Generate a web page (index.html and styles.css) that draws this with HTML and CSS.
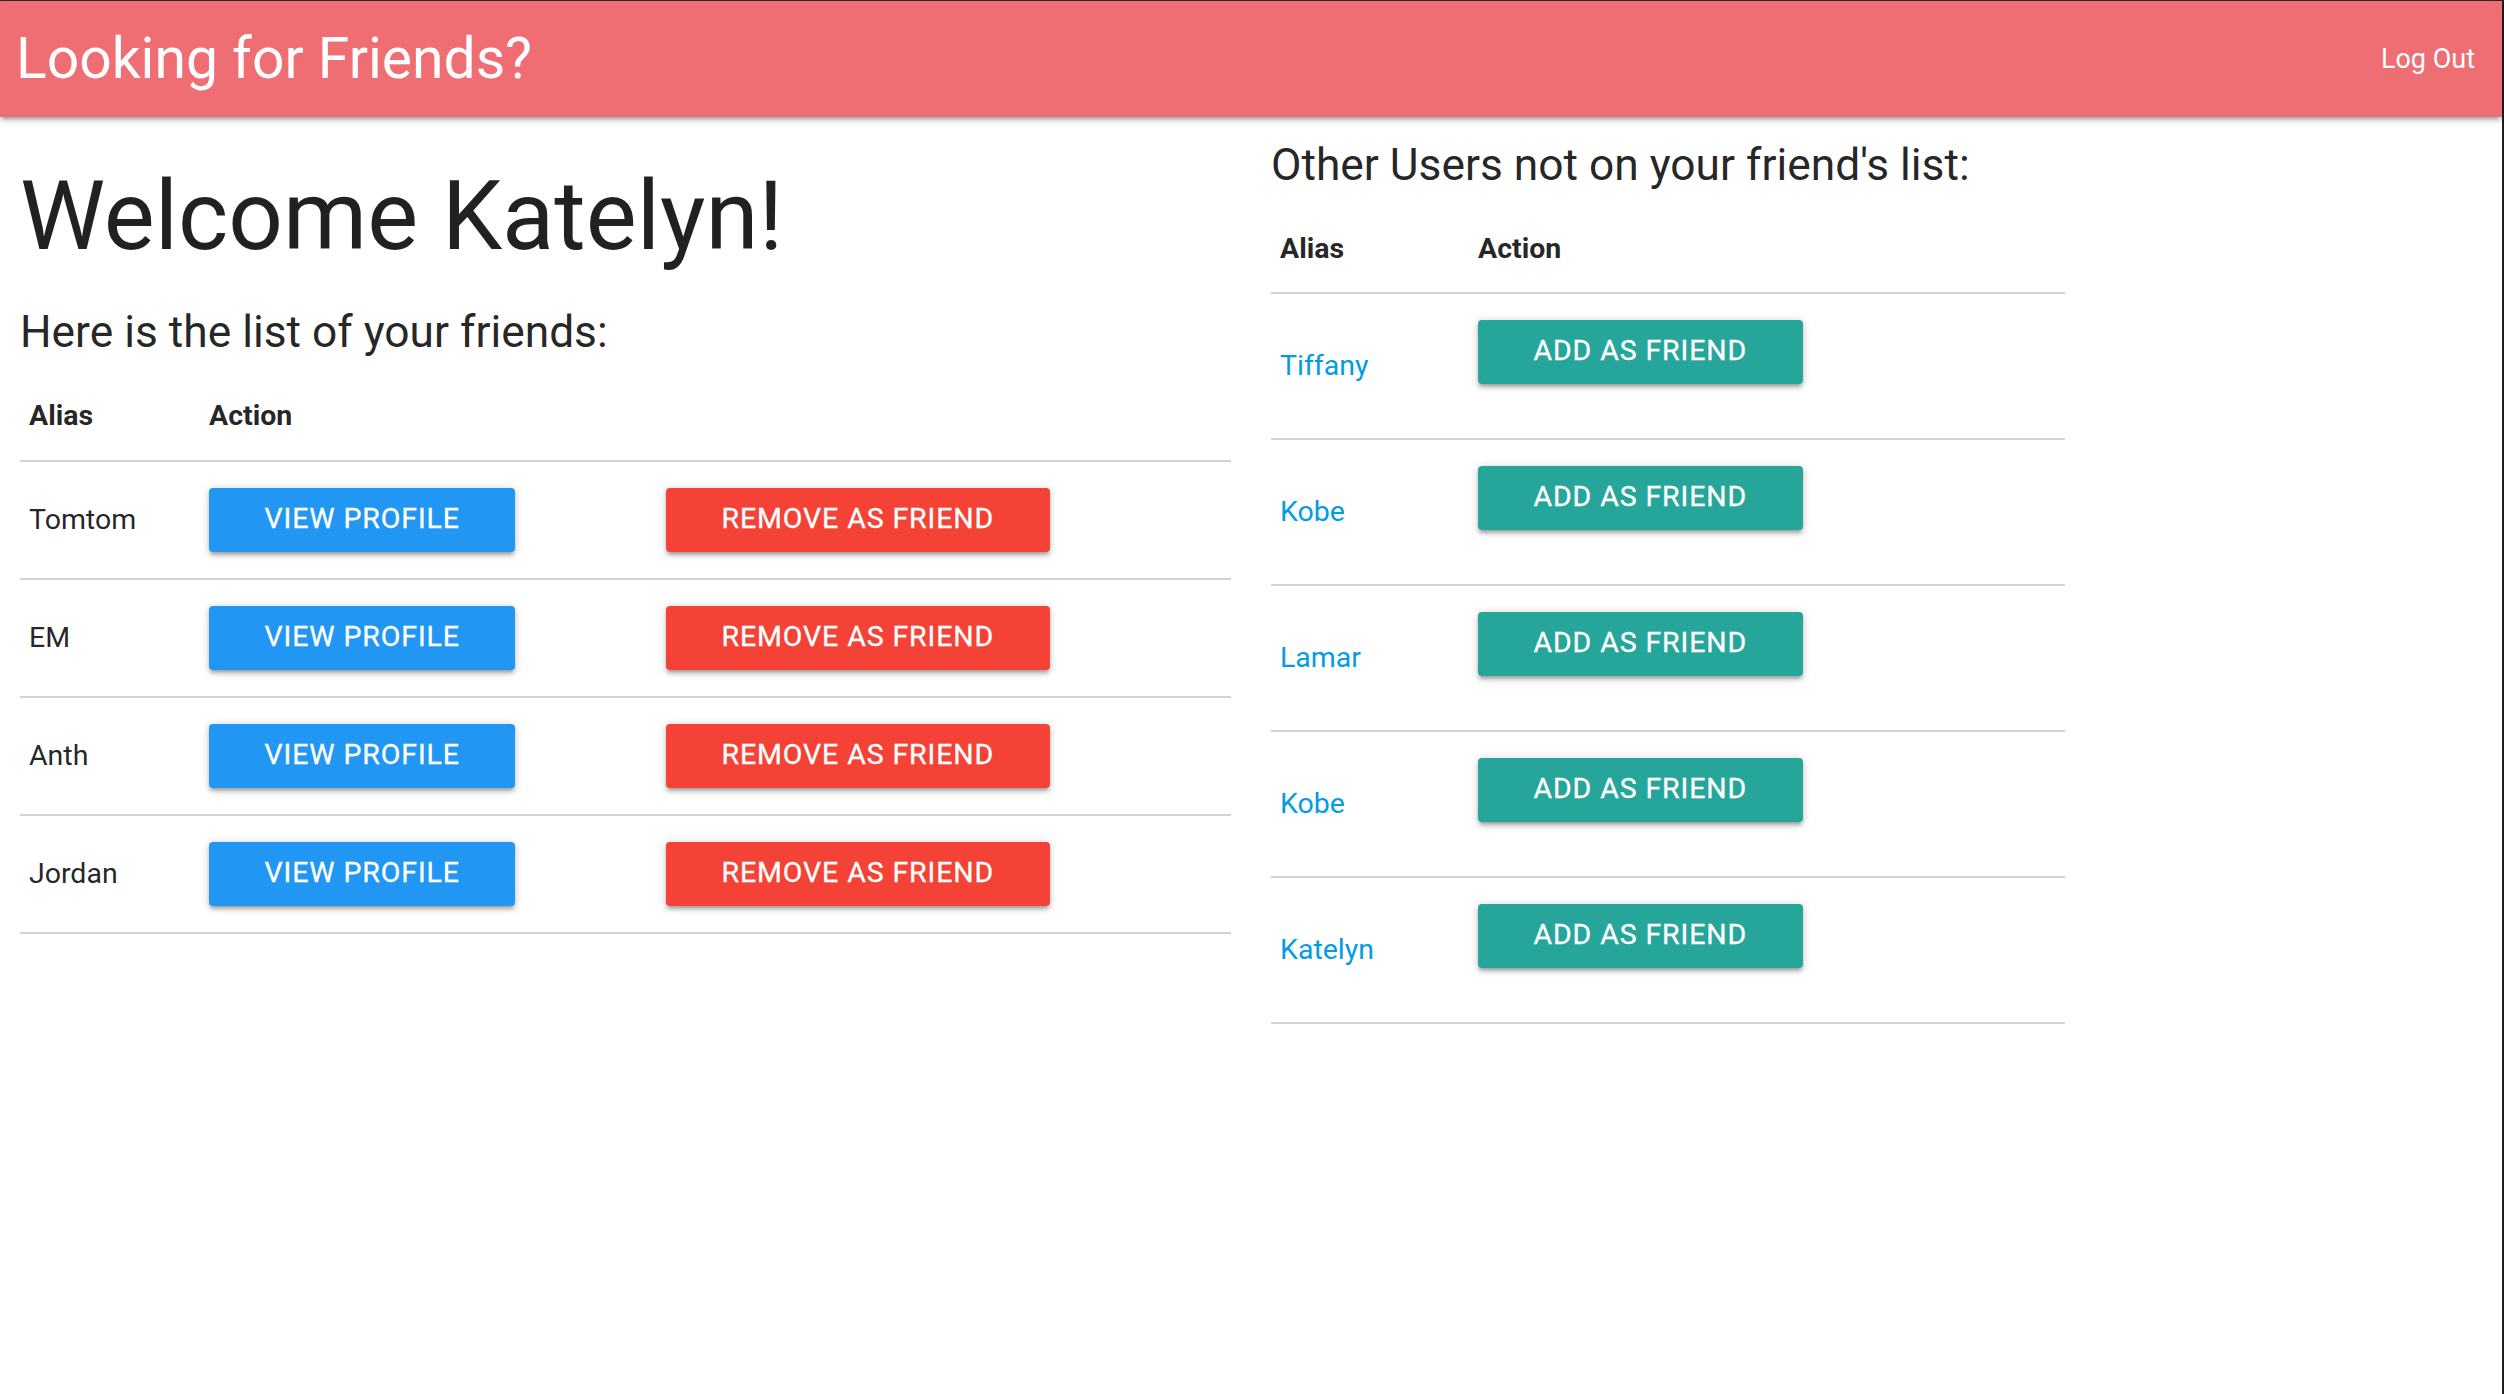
FILE: index.html
```html
<!DOCTYPE html>
<html lang="en">
<head>
<meta charset="utf-8">
<title>Looking for Friends?</title>
<link rel="stylesheet" href="styles.css">
</head>
<body>
<div class="frame">
  <nav class="nav">
    <a class="brand" href="#">Looking for Friends?</a>
    <a class="logout" href="#">Log Out</a>
  </nav>
  <main class="row">
    <section class="col col-left">
      <h2 class="welcome">Welcome Katelyn!</h2>
      <h5 class="subtitle">Here is the list of your friends:</h5>
      <table class="table">
        <colgroup>
          <col class="c-alias-l">
          <col class="c-view">
          <col>
        </colgroup>
        <thead>
          <tr><th>Alias</th><th>Action</th></tr>
        </thead>
        <tbody>
          <tr>
            <td>Tomtom</td>
            <td class="btncell"><a class="btn btn-blue" href="#">View Profile</a></td>
            <td class="btncell"><a class="btn btn-red" href="#">Remove as Friend</a></td>
          </tr>
          <tr>
            <td>EM</td>
            <td class="btncell"><a class="btn btn-blue" href="#">View Profile</a></td>
            <td class="btncell"><a class="btn btn-red" href="#">Remove as Friend</a></td>
          </tr>
          <tr>
            <td>Anth</td>
            <td class="btncell"><a class="btn btn-blue" href="#">View Profile</a></td>
            <td class="btncell"><a class="btn btn-red" href="#">Remove as Friend</a></td>
          </tr>
          <tr>
            <td>Jordan</td>
            <td class="btncell"><a class="btn btn-blue" href="#">View Profile</a></td>
            <td class="btncell"><a class="btn btn-red" href="#">Remove as Friend</a></td>
          </tr>
        </tbody>
      </table>
    </section>
    <section class="col col-right">
      <h5 class="subtitle subtitle-right">Other Users not on your friend's list:</h5>
      <table class="table">
        <colgroup>
          <col class="c-alias-r">
          <col>
        </colgroup>
        <thead>
          <tr><th>Alias</th><th>Action</th></tr>
        </thead>
        <tbody>
          <tr>
            <td><a class="user" href="#">Tiffany</a></td>
            <td class="btncell"><form class="addform"><a class="btn btn-teal" href="#">Add as Friend</a></form></td>
          </tr>
          <tr>
            <td><a class="user" href="#">Kobe</a></td>
            <td class="btncell"><form class="addform"><a class="btn btn-teal" href="#">Add as Friend</a></form></td>
          </tr>
          <tr>
            <td><a class="user" href="#">Lamar</a></td>
            <td class="btncell"><form class="addform"><a class="btn btn-teal" href="#">Add as Friend</a></form></td>
          </tr>
          <tr>
            <td><a class="user" href="#">Kobe</a></td>
            <td class="btncell"><form class="addform"><a class="btn btn-teal" href="#">Add as Friend</a></form></td>
          </tr>
          <tr>
            <td><a class="user" href="#">Katelyn</a></td>
            <td class="btncell"><form class="addform"><a class="btn btn-teal" href="#">Add as Friend</a></form></td>
          </tr>
        </tbody>
      </table>
    </section>
  </main>
</div>
</body>
</html>
```
FILE: styles.css
```css
* { box-sizing: border-box; }

html, body {
  margin: 0;
  padding: 0;
  background: #ffffff;
}

body {
  font-family: Roboto, "Liberation Sans", sans-serif;
  font-weight: 400;
  color: rgba(0, 0, 0, 0.87);
  font-size: 28.5px;
  line-height: 1.5;
}

.frame {
  min-height: 100vh;
  border-top: 1px solid #2a2a2a;
  border-right: 2px solid #1e1e1e;
}

a { text-decoration: none; }

/* NAV */
.nav {
  position: relative;
  z-index: 2;
  height: 116px;
  background: #ee6e73;
  color: #fff;
  display: flex;
  justify-content: space-between;
  align-items: center;
  padding: 0 27px 0 16px;
  box-shadow: 0 3.6px 3.6px 0 rgba(0, 0, 0, 0.14),
              0 5.4px 1.8px -3.6px rgba(0, 0, 0, 0.12),
              0 1.8px 9px 0 rgba(0, 0, 0, 0.2);
}

.brand {
  color: #fff;
  font-size: 57px;
  line-height: 116px;
}

.logout {
  color: #fff;
  font-size: 27px;
  line-height: 116px;
}

/* LAYOUT */
.row {
  display: flex;
  align-items: flex-start;
}

.col {
  padding: 0 20px;
}

.col-left { width: 50%; }
.col-right { width: 33.3333%; }

/* HEADINGS */
.welcome {
  font-size: 96px;
  line-height: 105.6px;
  font-weight: 400;
  margin: 47px 0 38px;
}

.subtitle {
  font-size: 44.3px;
  line-height: 48.7px;
  font-weight: 400;
  margin: 38px 0 12.5px;
}

.welcome + .subtitle { margin-top: 0; }

.subtitle-right {
  margin-top: 23.5px;
  margin-bottom: 12px;
}

/* TABLES */
.table {
  width: 100%;
  border-collapse: collapse;
  border-spacing: 0;
  line-height: 40.5px;
}

.c-alias-l { width: 180px; }
.c-view { width: 457px; }
.c-alias-r { width: 198px; }

.table tr {
  border-bottom: 2px solid #d3d3d3;
}

.table th {
  text-align: left;
  font-weight: 700;
  padding: 27.5px 9px 23px;
  vertical-align: middle;
}

.table td {
  padding: 26px 9px;
  vertical-align: middle;
  text-align: left;
}

.table td.btncell {
  line-height: 0;
}

.user {
  color: #039be5;
}

.addform {
  margin: 0 0 28px;
}

/* BUTTONS */
.btn {
  display: inline-block;
  vertical-align: top;
  height: 64px;
  line-height: 62px;
  padding: 0 55.5px;
  font-size: 28.5px;
  font-weight: 400;
  letter-spacing: 0.9px;
  text-transform: uppercase;
  color: #fff;
  -webkit-text-stroke: 0.3px #fff;
  border-radius: 4px;
  white-space: nowrap;
  box-shadow: 0 3.6px 3.6px 0 rgba(0, 0, 0, 0.14),
              0 5.4px 1.8px -3.6px rgba(0, 0, 0, 0.12),
              0 1.8px 9px 0 rgba(0, 0, 0, 0.2);
}

.btn-blue { background: #2196f3; }
.btn-red { background: #f44336; }
.btn-teal { background: #26a69a; }
```
